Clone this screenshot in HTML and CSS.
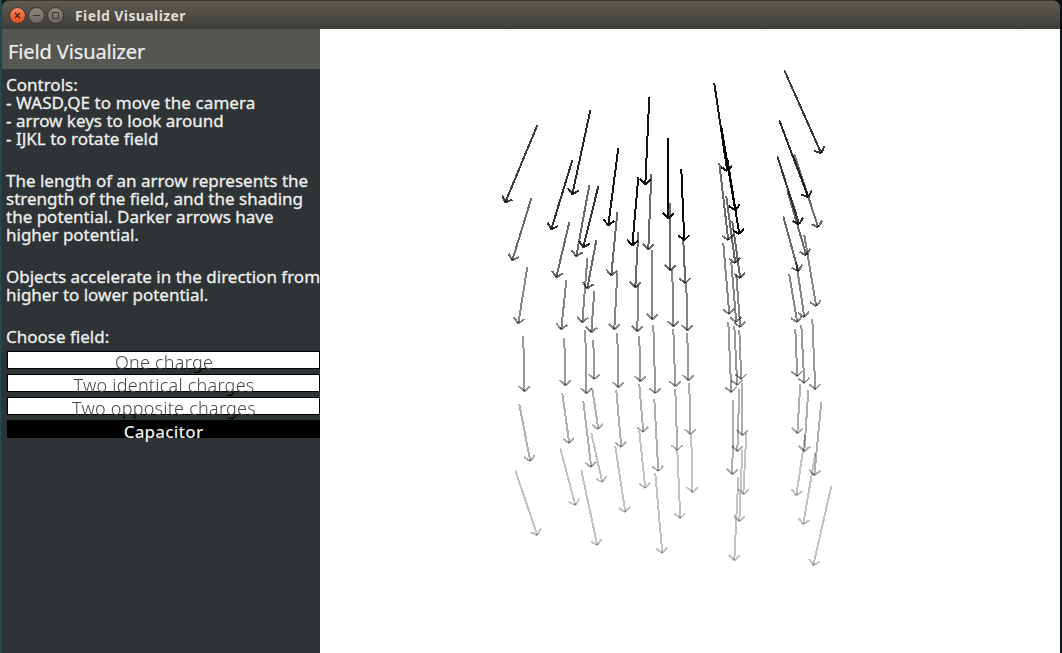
FILE: index.html
```html
<!DOCTYPE html>
<html lang="en">
<head>
<meta charset="utf-8">
<title>Field Visualizer</title>
<link rel="stylesheet" href="styles.css">
</head>
<body>
<div class="window">
  <header class="titlebar">
    <svg class="controls" width="58" height="20" viewBox="0 0 58 20">
      <defs>
        <linearGradient id="close" x1="0" y1="0" x2="0" y2="1"><stop offset="0" stop-color="#f58563"/><stop offset="1" stop-color="#e2501f"/></linearGradient>
        <linearGradient id="plain" x1="0" y1="0" x2="0" y2="1"><stop offset="0" stop-color="#8b8980"/><stop offset="1" stop-color="#67655e"/></linearGradient>
      </defs>
      <g stroke="#34332e"><circle cx="10.5" cy="10.5" r="8" fill="url(#close)"/><circle cx="29.500" cy="10.500" r="8" fill="url(#plain)"/><circle cx="48.500" cy="10.500" r="8" fill="url(#plain)"/></g>
      <path d="M8 8l5 5M13 8l-5 5" stroke="#4a2317" stroke-width="1.3"/>
      <path d="M26 10.500h7M45.500 7.500h6v6h-6z" fill="none" stroke="#3c3b37"/>
    </svg>
    <span class="caption">Field Visualizer</span>
  </header>
  <main class="content">
    <aside class="panel">
      <h1 class="heading">Field Visualizer</h1>
      <div class="info">
        <p>Controls:<br><span class="loose">- WASD,QE to move the camera</span><br>- arrow keys to look around<br>- IJKL to rotate field</p>
        <p>The length of an arrow represents the<br>strength of the field, and the shading<br>the potential. Darker arrows have<br>higher potential.</p>
        <p>Objects accelerate in the direction from<br>higher to lower potential.</p>
        <p>Choose field:</p>
      </div>
      <div class="choices">
        <button class="choice"><span class="label">One charge</span></button>
        <button class="choice"><span class="label">Two identical charges</span></button>
        <button class="choice"><span class="label">Two opposite charges</span></button>
        <button class="choice selected">Capacitor</button>
      </div>
    </aside>
    <svg class="field" id="field" width="740" height="624" viewBox="319.700 28.700 740 624"></svg>
  </main>
</div>
<script src="field.js"></script>
</body>
</html>
```

FILE: styles.css
```css
* { box-sizing: border-box; }
body { margin: 0; overflow: hidden; background: #0b1417; font-family: "Noto Sans", sans-serif; }
.window { height: 653px; padding: 0 2px; background: linear-gradient(90deg, #214b4d 0 1px, #254044 1px 2px, #0b1417 2px); }
.titlebar { height: 29px; display: flex; align-items: center; padding-left: 5px; border-top: 1px solid #3a3934; border-radius: 7px 7px 0 0; background: linear-gradient(#5d5b52, #3e3d39); }
.controls { display: block; }
.caption { margin-left: 10px; padding-top: 2px; font: 700 14px/20px "Noto Sans", sans-serif; letter-spacing: .4px; color: #dfdbd2; white-space: nowrap; }
.content { display: flex; height: 624px; }
.panel { width: 318px; background: #2e3436; color: #eeeeec; overflow: hidden; flex: none; }
.heading { margin: 0; height: 40px; padding: 6px 0 0 6px; background: #555753; font-size: 20px; line-height: 34px; font-weight: 400; letter-spacing: -.12px; white-space: nowrap; -webkit-text-stroke: .2px #eeeeec; }
.info { height: 282px; padding: 7px 0 0 4px; font-size: 17px; line-height: 18px; white-space: nowrap; -webkit-text-stroke: .3px #eeeeec; }
.info p { margin: 0 0 24px; }
.loose { letter-spacing: .08px; }
.choices { display: flex; flex-direction: column; gap: 5px; padding-left: 5px; }
.choice { height: 18px; padding: 0; border: 1px solid #000; border-radius: 0; background: #fff; color: #555; font: 300 18px/21px "Noto Sans", sans-serif; letter-spacing: .25px; display: flex; justify-content: center; align-items: flex-start; white-space: nowrap; }
/* Labels run past the button's lower edge, where they turn black. */
.label { margin-left: 1px; padding-bottom: 4px; color: transparent; background: linear-gradient(#444 0 17px, #000 17px); -webkit-background-clip: text; background-clip: text; }
.selected { background: #000; color: #eeeeec; font-size: 17px; font-weight: 500; letter-spacing: .2px; }
.field { display: block; background: #fff; }
```

FILE: field.js
```javascript
// Each column is [shade of its top arrow, then x1,y1,x2,y2 for every level].
const columns = [
  [.76, 537,125,505,202, 531,198,512,260, 527,267,518,323, 523,336,524,391, 519,404,530,461, 515,470,537,535],
  [.81, 572,160,551,229, 569,222,556,277, 566,280,561,329, 564,338,565,385, 562,393,569,443, 560,448,575,505],
  [.84, 590,110,572,194, 589,185,576,256, 587,258,582,322, 585,330,586,393, 583,401,591,467, 581,470,597,545],
  [.80, 598,186,583,247, 596,240,587,288, 594,291,591,332, 593,340,594,379, 592,388,598,429, 591,433,602,482],
  [.90, 618,148,608,225, 617,212,611,275, 617,273,614,329, 617,333,618,387, 616,390,621,447, 615,446,625,512],
  [.92, 638,177,632,245, 638,232,635,287, 638,285,637,331, 639,336,640,381, 639,384,643,432, 639,431,645,488],
  [.90, 649,97,645,184, 651,174,648,249, 652,250,652,319, 653,325,655,393, 654,399,658,471, 655,473,662,553],
  [.98, 668,138,668,218, 670,203,670,270, 672,270,673,326, 673,329,675,386, 675,389,677,450, 677,450,680,518],
  [.95, 681,169,684,240, 683,240,685,283, 686,283,687,330, 687,333,688,380, 689,383,690,434, 691,435,692,492],
  [.89, 714,83,727,171, 719,163,728,240, 723,243,729,314, 728,322,731,392, 733,400,732,474, 738,477,734,560],
  [.97, 721,127,735,210, 726,196,735,263, 731,262,736,322, 734,326,737,385, 739,389,737,451, 742,450,739,521],
  [.96, 727,158,739,234, 732,221,740,278, 736,275,740,327, 739,330,741,379, 742,383,742,435, 746,433,743,494],
  [.77, 784,70,821,153, 794,154,818,227, 804,235,816,306, 812,319,815,389, 821,402,814,475, 831,486,813,565],
  [.84, 779,120,808,197, 787,190,806,255, 796,262,804,317, 801,325,804,383, 808,390,804,451, 815,453,803,524],
  [.80, 777,156,799,224, 783,216,798,271, 789,274,797,322, 795,329,797,376, 800,384,797,433, 805,435,796,495]
];
const levels = [1, .59, .48, .395, .315, .24];
const field = document.getElementById("field");

function line(x1, y1, x2, y2, opacity) {
  const el = document.createElementNS("http://www.w3.org/2000/svg", "line");
  Object.entries({ x1, y1, x2, y2, stroke: "#000", "stroke-width": 2, "stroke-opacity": opacity, "shape-rendering": "crispEdges" })
    .forEach(([k, v]) => el.setAttribute(k, v));
  field.appendChild(el);
}

for (const [top, ...p] of columns) {
  levels.forEach((shade, i) => {
    const [x1, y1, x2, y2] = p.slice(i * 4, i * 4 + 4);
    const opacity = i ? shade : top;
    const back = Math.atan2(y1 - y2, x1 - x2);
    line(x1, y1, x2, y2, opacity);
    for (const turn of [-.82, .82]) {
      line(x2, y2, x2 + 7.6 * Math.cos(back + turn), y2 + 7.6 * Math.sin(back + turn), opacity);
    }
  });
}
```
